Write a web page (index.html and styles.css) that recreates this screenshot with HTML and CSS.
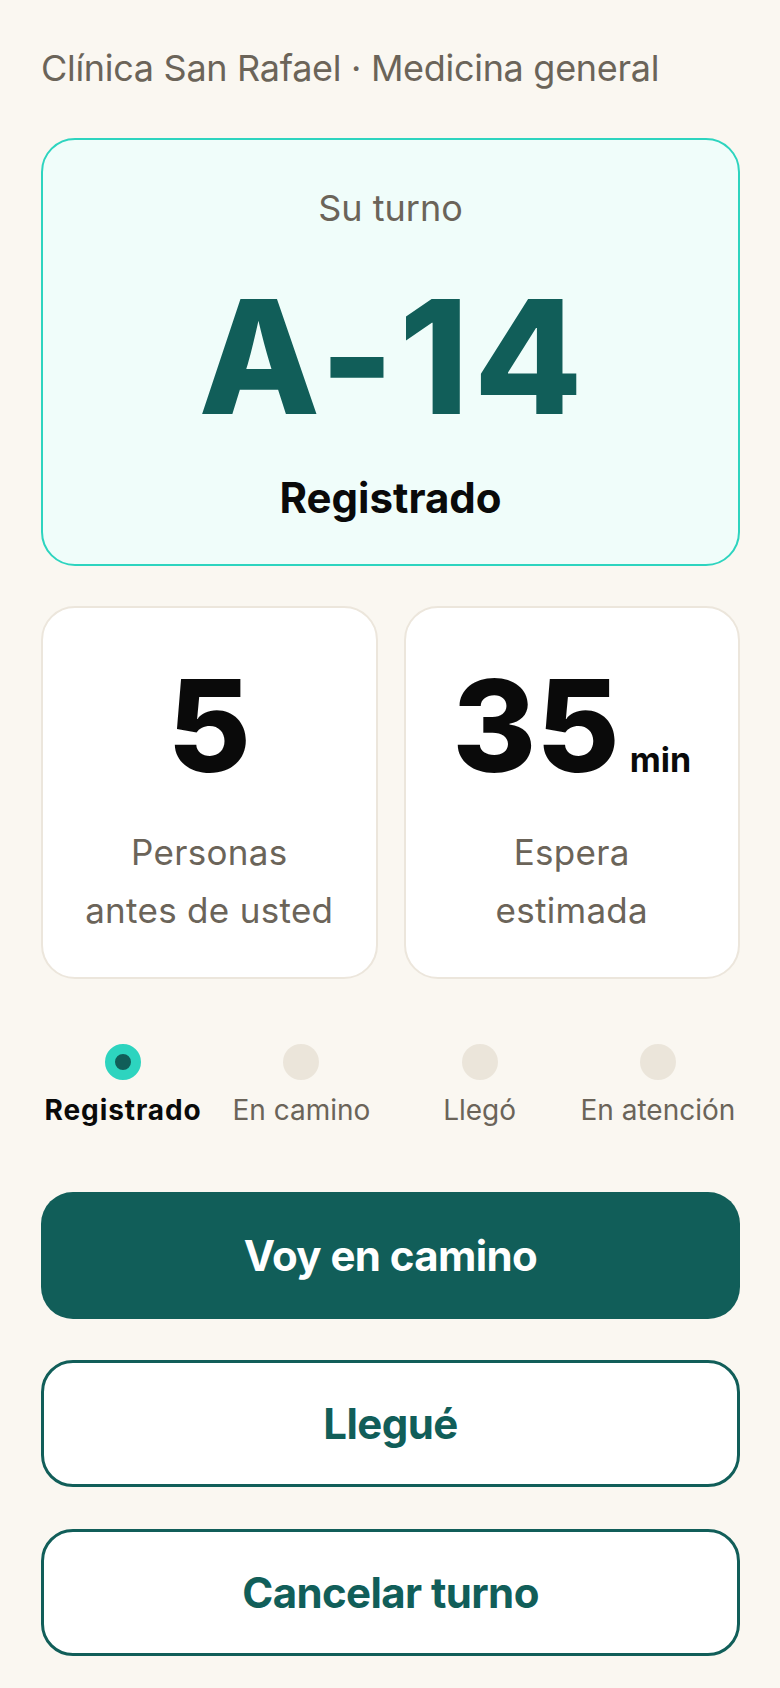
FILE: index.html
```html
<!DOCTYPE html>
<html lang="es">
<head>
<meta charset="utf-8">
<meta name="viewport" content="width=device-width, initial-scale=1">
<title>Su turno</title>
<link rel="stylesheet" href="styles.css">
</head>
<body>
<main class="page">
  <header class="clinic">Clínica San Rafael · Medicina general</header>

  <section class="ticket">
    <div class="ticket-label">Su turno</div>
    <div class="ticket-number">A-14</div>
    <div class="ticket-status">Registrado</div>
  </section>

  <section class="stats">
    <div class="stat">
      <div class="stat-value">5</div>
      <div class="stat-label">Personas<br>antes de usted</div>
    </div>
    <div class="stat">
      <div class="stat-value">35<span class="stat-unit">min</span></div>
      <div class="stat-label">Espera<br>estimada</div>
    </div>
  </section>

  <ol class="steps">
    <li class="step step-active"><span class="dot"></span><span class="step-name">Registrado</span></li>
    <li class="step"><span class="dot"></span><span class="step-name">En camino</span></li>
    <li class="step"><span class="dot"></span><span class="step-name">Llegó</span></li>
    <li class="step"><span class="dot"></span><span class="step-name">En atención</span></li>
  </ol>

  <div class="actions">
    <button class="btn btn-primary" type="button">Voy en camino</button>
    <button class="btn btn-outline" type="button">Llegué</button>
    <button class="btn btn-outline" type="button">Cancelar turno</button>
  </div>
</main>
</body>
</html>
```

FILE: styles.css
```css
* { box-sizing: border-box; }

html, body {
  margin: 0;
  padding: 0;
  background: #faf7f1;
}

body {
  font-family: Inter, "Noto Sans", "Liberation Sans", sans-serif;
  color: #111;
}

.page {
  width: 780px;
  padding: 47px 40px 0 41px;
}

.clinic {
  font-size: 36px;
  line-height: 1.2;
  color: #6b6459;
  font-weight: 400;
  letter-spacing: -0.3px;
}

.ticket {
  margin-top: 48px;
  height: 428px;
  border: 2px solid #2dd4bf;
  border-radius: 34px;
  background: #f0fdfa;
  text-align: center;
  padding-top: 47px;
}

.ticket-label {
  font-size: 36px;
  line-height: 1.2;
  color: #6b6459;
}

.ticket-number {
  margin-top: 48px;
  font-size: 158px;
  line-height: 1;
  font-weight: 800;
  color: #115e59;
  letter-spacing: 5px;
  text-indent: 5px;
}

.ticket-status {
  margin-top: 37px;
  font-size: 42px;
  line-height: 1.2;
  font-weight: 700;
  color: #0a0a0a;
}

.stats {
  margin-top: 40px;
  display: grid;
  grid-template-columns: 1fr 1fr;
  gap: 26px;
}

.stat {
  height: 373px;
  background: #fff;
  border: 2px solid #ece6dc;
  border-radius: 34px;
  text-align: center;
  padding-top: 54px;
}

.stat-value {
  font-size: 128px;
  line-height: 1;
  font-weight: 800;
  color: #0a0a0a;
}

.stat-unit {
  font-size: 34px;
  font-weight: 700;
  margin-left: 10px;
}

.stat-label {
  margin-top: 34px;
  font-size: 35px;
  line-height: 1.65;
  color: #6b6459;
  letter-spacing: 0.3px;
}

.steps {
  list-style: none;
  margin: 65px 0 0;
  padding: 0;
  display: grid;
  grid-template-columns: repeat(4, 1fr);
  gap: 14px;
}

.step {
  display: flex;
  flex-direction: column;
  align-items: center;
  gap: 14px;
}

.dot {
  width: 36px;
  height: 36px;
  border-radius: 50%;
  background: #ebe5da;
}

.step-active .dot {
  background: #115e59;
  border: 10px solid #2dd4bf;
}

.step-name {
  font-size: 28px;
  line-height: 1.2;
  color: #6b6459;
  white-space: nowrap;
}

.step-active .step-name {
  color: #0a0a0a;
  font-weight: 700;
  letter-spacing: 0.9px;
}

.actions {
  margin-top: 64px;
  display: flex;
  flex-direction: column;
  gap: 41.5px;
}

.btn {
  height: 127px;
  width: 100%;
  border-radius: 32px;
  font-family: inherit;
  font-size: 42px;
  font-weight: 700;
  letter-spacing: -0.6px;
  cursor: pointer;
}

.btn-primary {
  background: #115e59;
  color: #fff;
  border: none;
}

.btn-outline {
  background: #fff;
  color: #115e59;
  border: 3px solid #115e59;
}
```
